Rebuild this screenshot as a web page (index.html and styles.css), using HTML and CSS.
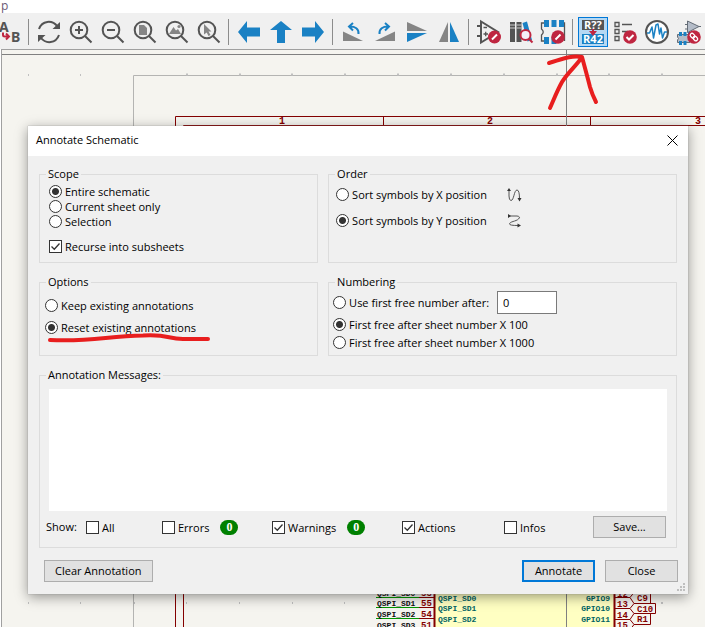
FILE: index.html
```html
<!DOCTYPE html>
<html lang="en">
<head>
<meta charset="utf-8">
<title>Annotate Schematic</title>
<link rel="stylesheet" href="styles.css">
</head>
<body>
<div class="app">
  <div class="menu-strip">p</div>

  <div class="toolbar" role="toolbar" aria-label="Schematic tools">
    <button class="tool tool-clipped" aria-label="Find and replace"><svg viewBox="0 0 32 32"><text class="glyph-letter" x="6" y="16">A</text><text class="glyph-letter" x="18" y="26">B</text><path class="line-red" d="M10 16.500V19Q10 20.500 12 20.500H15M13 17.500L16 20.500L13 23.500"/></svg></button>
    <span class="separator"></span>
    <button class="tool" aria-label="Refresh"><svg viewBox="0 0 32 32"><path class="line" d="M6 13C9 4.500 19 3.500 24.500 10.500M26 19C23 27.500 13 28.500 7.500 21.500"/><path class="dark" d="M27 6V13H19.500ZM5 26V19H12.500Z"/></svg></button>
    <button class="tool" aria-label="Zoom in"><svg viewBox="0 0 32 32"><circle class="line" cx="14" cy="14" r="8.300"/><path class="line" d="M10 14H18M14 10V18M20 20L26.500 26.500"/></svg></button>
    <button class="tool" aria-label="Zoom out"><svg viewBox="0 0 32 32"><circle class="line" cx="14" cy="14" r="8.300"/><path class="line" d="M10 14H18M20 20L26.500 26.500"/></svg></button>
    <button class="tool" aria-label="Zoom to page"><svg viewBox="0 0 32 32"><path class="gray" d="M10 9H15L18 12V19H10Z"/><circle class="line" cx="14" cy="14" r="8.300"/><path class="line" d="M20 20L26.500 26.500"/></svg></button>
    <button class="tool" aria-label="Zoom to objects"><svg viewBox="0 0 32 32"><path class="gray" d="M8 18L12.500 11L15 14.500L17 13L20 18Z"/><circle class="gray" cx="18" cy="10.500" r="1.600"/><circle class="line" cx="14" cy="14" r="8.300"/><path class="line" d="M20 20L26.500 26.500"/></svg></button>
    <button class="tool" aria-label="Zoom to selection"><svg viewBox="0 0 32 32"><path class="gray" d="M11 8L18.500 15.500H15.500L17.500 19L15.500 20L13.700 16.500L11 18.500Z"/><circle class="line" cx="14" cy="14" r="8.300"/><path class="line" d="M20 20L26.500 26.500"/></svg></button>
    <span class="separator"></span>
    <button class="tool" aria-label="Back"><svg viewBox="0 0 32 32"><path class="blue" d="M5 16L14 5V11.500H27V20.500H14V27Z"/></svg></button>
    <button class="tool" aria-label="Up"><svg viewBox="0 0 32 32"><path class="blue" d="M16 5L27 14H20V27H12V14H5Z"/></svg></button>
    <button class="tool" aria-label="Forward"><svg viewBox="0 0 32 32"><path class="blue" d="M27 16L18 5V11.500H5V20.500H18V27Z"/></svg></button>
    <span class="separator"></span>
    <button class="tool" aria-label="Rotate left"><svg viewBox="0 0 32 32"><path class="gray" d="M6 15.500V25H26Z"/><path class="line-blue" d="M21.500 18C22 12.500 18 10.500 13 10.500M16 7L12 10.500L16 14.500"/></svg></button>
    <button class="tool" aria-label="Rotate right"><svg viewBox="0 0 32 32"><path class="gray" d="M26 15.500V25H6Z"/><path class="line-blue" d="M10.500 18C10 12.500 14 10.500 19 10.500M16 7L20 10.500L16 14.500"/></svg></button>
    <button class="tool" aria-label="Mirror vertically"><svg viewBox="0 0 32 32"><path class="gray" d="M6 6V15H26Z"/><path class="blue" d="M6 17H26L6 26Z"/></svg></button>
    <button class="tool" aria-label="Mirror horizontally"><svg viewBox="0 0 32 32"><path class="gray" d="M6 26H15V6Z"/><path class="blue" d="M17 6V26H26Z"/></svg></button>
    <span class="separator"></span>
    <button class="tool" aria-label="Symbol editor"><svg viewBox="0 0 32 32"><path class="line" d="M8 5.500V26.500L25 16ZM4 10H8M4 20H8"/><path class="line-thin" d="M10.500 11.500H14M10.500 18H15M12.700 15.800V20.300"/><circle class="red" cx="21.500" cy="21" r="6.500"/><path class="line-white" d="M19 23.500L24 18.500"/></svg></button>
    <button class="tool" aria-label="Symbol library browser"><svg viewBox="0 0 32 32"><path class="dark" d="M5 6H10V26H5ZM11.500 6H16.500V26H11.500Z"/><path class="line-pale" d="M5 9H10M5 12H10M11.500 9H16.500M11.500 12H16.500"/><path class="blue" d="M17.500 7L22 5.500L27 24L22.500 25.500Z"/><circle class="lens" cx="20.500" cy="19" r="5"/><path class="line-red" d="M24 23L27.500 26.500"/></svg></button>
    <button class="tool" aria-label="Footprint editor"><svg viewBox="0 0 32 32"><path class="line-thin" d="M7 7H4.500V13Q8 16 4.500 19V25H7M24 7H27.500V25"/><path class="blue" d="M7 4H12V11H7ZM14.500 4H19.500V11H14.500ZM22 4H27V11H22ZM7 21H12V28H7ZM14.500 21H19.500V28H14.500Z"/><circle class="red" cx="21" cy="21" r="6.800"/><path class="line-white" d="M18.500 23.500L23.500 18.500"/></svg></button>
    <span class="separator"></span>
    <button class="tool tool-active" aria-label="Annotate schematic"><svg viewBox="0 0 32 32"><path class="dark" d="M5 4H27V14H5Z"/><path class="blue" d="M5 18H27V28H5Z"/><text class="glyph-tag" x="16" y="13">R??</text><text class="glyph-tag" x="16" y="27">R42</text><path class="red" d="M15 13H17V15H20L16 20L12 15H15Z"/></svg></button>
    <button class="tool" aria-label="Electrical rules checker"><svg viewBox="0 0 32 32"><path class="line-thin" d="M6 6.500H10V10.500H6ZM6 13.500H10V17.500H6ZM6 20.500H10V24.500H6ZM13 8.500H23M13 15.500H19"/><circle class="red" cx="21" cy="21" r="6.800"/><path class="line-white" d="M17.500 21L20 23.500L24.500 19"/></svg></button>
    <button class="tool" aria-label="Simulator"><svg viewBox="0 0 32 32"><circle class="disc" cx="16" cy="16" r="11"/><path class="wave" d="M6 17H8.500L11 11L12.500 22L15 9L17 8L18.500 18L20 12L21.500 22L23.500 16H26"/></svg></button>
    <button class="tool" aria-label="Assign footprints"><svg viewBox="0 0 32 32"><path class="symbol" d="M14.500 5V16.500L26 10.500ZM12 8.500H14M12 13H14M26 10.500H28"/><path class="symbol" d="M4.500 18.500H17V26.500H4.500V24Q6.500 22.500 4.500 21Z"/><path class="blue" d="M6 16H9V20H6ZM10.500 16H13.500V20H10.500ZM15 16H18V20H15ZM6 25H9V29H6ZM10.500 25H13.500V29H10.500Z"/><circle class="red" cx="21" cy="21" r="6.800"/><g class="chain" transform="rotate(45 21 21)"><rect x="16.500" y="19.300" width="5" height="3.600" rx="1.800"/><rect x="20.500" y="19.300" width="5" height="3.600" rx="1.800"/></g></svg></button>
  </div>

  <main class="canvas">
    <svg class="sheet" width="705" height="578" viewBox="0 49 705 578" aria-hidden="true">
      <path class="ruler" d="M2 54.500H4000"/>
      <path class="page-edge" d="M133.500 4000V75.500H4000"/>
      <path class="grid-dots" d="M28 75H29M80 75H81M186 74.500H188M239 74.500H241M291 74.500H293M344 74.500H346M397 74.500H399M450 74.500H452M503 74.500H505M556 74.500H558M608 74.500H610M661 74.500H663M28 603H29M80 603H81M134 603H135M186 603H187M239 603H240M292 603H293M344 603H345M661 603H663"/>
      <path class="frame" d="M175.500 4000V116.500H4000M183.500 4000V125.500H4000M383.500 116V125M590.500 116V125"/>
      <g class="frame-text"><text x="282" y="124">1</text><text x="490" y="124">2</text><text x="698" y="124">3</text></g>
      <path class="chip" d="M434.500 560H614.500V640H434.500Z"/>
      <path class="cursor" d="M566.500 50V4000"/>
      <path class="wire" d="M376 597.500H419M376 607.500H419M376 618.500H419"/>
      <path class="pin" d="M419 597.500H434M419 607.500H434M419 618.500H434M614 597.500H630M614 608.500H630M614 619.500H630"/>
      <g class="net"><text x="377" y="596">QSPI_SD0</text><text x="377" y="606">QSPI_SD1</text><text x="377" y="617">QSPI_SD2</text><text x="377" y="628">QSPI_SD3</text></g>
      <g class="pin-number"><text x="421" y="596">53</text><text x="421" y="606">55</text><text x="421" y="617">54</text><text x="421" y="628">51</text><text x="617" y="597">12</text><text x="617" y="607">13</text><text x="617" y="618">14</text><text x="617" y="628">15</text></g>
      <g class="pin-name"><text x="438" y="601">QSPI_SD0</text><text x="438" y="611">QSPI_SD1</text><text x="438" y="622">QSPI_SD2</text><text x="438" y="632">QSPI_SD3</text></g>
      <g class="pin-name pin-name-end"><text x="610" y="601">GPIO9</text><text x="610" y="611">GPIO10</text><text x="610" y="622">GPIO11</text><text x="610" y="632">GPIO12</text></g>
      <path class="pin" d="M630 597.500L634 592.500H650.500V603.500H634ZM630 608.500L634 603.500H655.500V613.500H634ZM630 619.500L634 613.500H650.500V624.500H634ZM630 630L634 624.500H650"/>
      <g class="pin-number"><text x="637" y="601">C9</text><text x="637" y="612">C10</text><text x="637" y="622">R1</text></g>
      <path class="marker" d="M549 63C560 60 570 55 582 57C578 64 568 72 562 82C557 91 554 99 550 108M582 57C585 68 588 79 590 87C592 94 594 98 596 102"/>
    </svg>
  </main>

  <section class="dialog" role="dialog" aria-labelledby="dialog-title">
    <header class="titlebar">
      <h1 class="title" id="dialog-title">Annotate Schematic</h1>
      <button class="close" aria-label="Close window"><svg viewBox="0 0 11 11"><path d="M.5.5L10.500 10.500M10.500.5L.5 10.500"/></svg></button>
    </header>
    <form class="body">
      <div class="groups">
        <fieldset class="group scope">
          <legend>Scope</legend>
          <label class="choice"><input type="radio" name="scope" checked>Entire schematic</label>
          <label class="choice"><input type="radio" name="scope">Current sheet only</label>
          <label class="choice"><input type="radio" name="scope">Selection</label>
          <label class="choice recurse"><input type="checkbox" checked>Recurse into subsheets</label>
        </fieldset>
        <fieldset class="group order">
          <legend>Order</legend>
          <div class="order-row">
            <label class="choice"><input type="radio" name="order">Sort symbols by X position</label>
            <svg class="order-icon" viewBox="0 0 16 16"><path d="M3 3V9Q3 13.500 5 13.500C8 13.500 8 3 11 3Q13.500 3 13.500 12"/><path class="tip" d="M1 4H5L3 1ZM11.500 11H15.500L13.500 14.500Z"/></svg>
          </div>
          <div class="order-row">
            <label class="choice"><input type="radio" name="order" checked>Sort symbols by Y position</label>
            <svg class="order-icon" viewBox="0 0 16 16"><path d="M2 3H11Q15 3.500 12.500 6C10 8.500 3.500 8.500 3.500 11Q3.500 12.500 12 12.500"/><path class="tip" d="M2 1L5 3L2 5ZM11.500 10.500L15 12.500L11.500 14.500Z"/></svg>
          </div>
        </fieldset>
        <fieldset class="group options">
          <legend>Options</legend>
          <label class="choice"><input type="radio" name="existing">Keep existing annotations</label>
          <label class="choice"><input type="radio" name="existing" checked>Reset existing annotations</label>
          <svg class="underline" viewBox="0 0 164 12" aria-hidden="true"><path d="M3 8C45 10 60 4 96 3.500C122 2 120 7 136 7H161"/></svg>
        </fieldset>
        <fieldset class="group numbering">
          <legend>Numbering</legend>
          <div class="number-row">
            <label class="choice"><input type="radio" name="number">Use first free number after:</label>
            <input class="number" type="text" value="0" aria-label="First free number after">
          </div>
          <label class="choice"><input type="radio" name="number" checked>First free after sheet number X 100</label>
          <label class="choice"><input type="radio" name="number">First free after sheet number X 1000</label>
        </fieldset>
      </div>
      <fieldset class="group messages">
        <legend>Annotation Messages:</legend>
        <textarea class="log" aria-label="Annotation messages" readonly></textarea>
        <div class="filters">
          <span class="show">Show:</span>
          <label class="choice"><input type="checkbox">All</label>
          <div class="filter"><label class="choice"><input type="checkbox">Errors</label><span class="count">0</span></div>
          <div class="filter"><label class="choice"><input type="checkbox" checked>Warnings</label><span class="count">0</span></div>
          <label class="choice"><input type="checkbox" checked>Actions</label>
          <label class="choice"><input type="checkbox">Infos</label>
          <button class="push" type="button">Save...</button>
        </div>
      </fieldset>
      <footer class="actions">
        <button class="push clear" type="button">Clear Annotation</button>
        <button class="push push-default" type="button">Annotate</button>
        <button class="push" type="button">Close</button>
      </footer>
    </form>
    <svg class="grip" viewBox="0 0 9 9" aria-hidden="true"><path d="M6 0H8V2H6ZM3 3H5V5H3ZM6 3H8V5H6ZM0 6H2V8H0ZM3 6H5V8H3ZM6 6H8V8H6Z"/></svg>
  </section>
</div>
</body>
</html>
```
FILE: styles.css
```css
* { box-sizing: border-box; }

body {
  margin: 0;
  font: 11px/16px "Open Sans", "Noto Sans", sans-serif;
  color: #000;
}

button, input, textarea { font: inherit; color: inherit; margin: 0; }

.app {
  position: relative;
  display: flex;
  flex-direction: column;
  height: 100vh;
  overflow: hidden;
  background: #fff;
}

.menu-strip {
  height: 13px;
  line-height: 12px;
  padding-left: 1px;
  font-size: 12px;
  color: #6b5a75;
}

/* Toolbar */
.toolbar {
  display: flex;
  flex: none;
  height: 36px;
  padding-top: 3px;
  background: #f0f0f0;
  overflow: hidden;
}
.tool {
  flex: none;
  width: 32px;
  height: 32px;
  padding: 0;
  border: 0;
  background: none;
}
.tool svg { display: block; width: 32px; height: 32px; }
.tool-clipped { margin-left: -7px; }
.tool-active {
  background: #b5d8f3;
  box-shadow: inset 0 0 0 1px #0078d7;
  width: 30px;
  height: 30px;
  margin: 1px;
}
.tool-active svg { margin: -1px; }
.separator {
  flex: none;
  width: 8px;
  height: 26px;
  margin-top: 3px;
  background: linear-gradient(#8c8c8c, #8c8c8c) 3px 0 / 1px 100% no-repeat;
}

.dark { fill: #545454; }
.gray { fill: #858585; }
.blue { fill: #1a81c4; }
.red { fill: #bf2641; }
.line, .line-thin, .line-blue, .line-red, .line-white, .line-pale { fill: none; stroke-width: 2; }
.line { stroke: #545454; }
.line-thin { stroke: #545454; stroke-width: 1.300; }
.line-blue { stroke: #1a81c4; }
.line-red { stroke: #bf2641; }
.line-white { stroke: #fff; }
.line-pale { stroke: #ccc; stroke-width: 1; }
.lens { fill: #f4eef8; stroke: #bf2641; stroke-width: 2; }
.disc { fill: #fff; stroke: #545454; stroke-width: 2; }
.wave { fill: none; stroke: #1a81c4; stroke-width: 1.500; stroke-linejoin: round; }
.symbol { fill: #b4bcc8; stroke: #646c76; stroke-width: 1; }
.chain { fill: none; stroke: #fff; stroke-width: 1.300; }
.glyph-letter { font: bold 14px "Noto Sans", sans-serif; fill: #545454; }
.glyph-tag { font: bold 11px "Open Sans", sans-serif; fill: #fff; text-anchor: middle; }

/* Drawing canvas */
.canvas {
  position: relative;
  flex: 1;
  min-height: 0;
  overflow: hidden;
  background: #f5f4ef;
  margin-left: 1px;
  box-shadow: inset 1px 1px #a0a0a0;
}
.sheet { position: absolute; top: 0; left: -1px; overflow: visible; }
.sheet path { fill: none; }
.ruler { stroke: #808080; }
.page-edge { stroke: #b4b4b2; }
.grid-dots { stroke: #c0c0c0; stroke-width: 2; }
.frame, .pin { stroke: #840000; }
.cursor { stroke: #808080; }
.wire { stroke: #009600; }
.sheet .chip { fill: #ffffc2; stroke: #840000; stroke-width: 2; }
.marker { stroke: #e81e1e; stroke-width: 4; stroke-linecap: round; stroke-linejoin: round; }
.frame-text, .net, .pin-number, .pin-name { font: bold 8px "Liberation Mono", monospace; }
.frame-text { font-size: 10px; text-anchor: middle; fill: #840000; }
.pin-number { font-size: 9px; fill: #840000; }
.net { fill: #0f0f0f; }
.pin-name { fill: #006464; }
.pin-name-end { text-anchor: end; }

/* Dialog window */
.dialog {
  position: absolute;
  top: 126px;
  left: 28px;
  right: 17px;
  background: #f0f0f0;
  box-shadow: 0 0 1px #888, 0 3px 12px rgba(0, 0, 0, .4);
}
.titlebar {
  display: flex;
  align-items: center;
  justify-content: space-between;
  height: 30px;
  padding: 0 10px 2px 8px;
  background: #fff;
}
.title { margin: 0; font-size: 11px; font-weight: 400; }
.close { padding: 0; border: 0; background: none; }
.close svg { display: block; width: 11px; height: 11px; fill: none; stroke: #000; }

.body { padding: 10px 11px 12px; }
.groups { display: grid; grid-template-columns: 4fr 5fr; gap: 11px 10px; }
.group {
  position: relative;
  min-width: 0;
  margin: 0;
  border: 1px solid #dcdcdc;
}
legend { padding: 0 2px; margin-left: -3px; }
.choice { display: flex; align-items: center; gap: 3px; height: 15px; line-height: 15px; white-space: nowrap; }
.choice input {
  appearance: none;
  flex: none;
  width: 13px;
  height: 13px;
  border: 1px solid #333;
  background: #fff;
}
.choice input[type="radio"] { border-radius: 50%; }
.choice input[type="radio"]:checked { background: radial-gradient(circle, #333 3px, #fff 4px); }
.choice input[type="checkbox"]:checked {
  background: url("data:image/svg+xml,%3Csvg xmlns='http://www.w3.org/2000/svg' viewBox='0 0 11 11'%3E%3Cpath d='M1.500 5.500L4.300 8.300L9.500 2.500' fill='none' stroke='%23333' stroke-width='1.300'/%3E%3C/svg%3E") #fff;
}

.scope { padding: 2px 9px 8px; }
.recurse { margin-top: 10px; }
.order { padding: 5px 7px; }
.order legend { margin-left: -1px; }
.order-row { display: flex; align-items: center; gap: 19px; height: 15px; margin-bottom: 11px; }
.order-icon { width: 16px; height: 16px; fill: none; stroke: #555; }
.order-icon .tip { fill: #333; stroke: none; }
.options { padding: 8px 5px 20px; }
.options legend { margin-left: 1px; }
.options .choice + .choice { margin-top: 7px; }
.underline { position: absolute; left: 7px; top: 42px; width: 164px; height: 12px; fill: none; stroke: #e81e1e; stroke-width: 4; stroke-linecap: round; }
.numbering { padding: 1px 4px 4px; }
.numbering legend { margin-left: 2px; }
.number-row { display: flex; align-items: center; gap: 8px; }
.numbering > .choice { margin-top: 3px; }
.number { width: 60px; height: 23px; padding: 0 5px; border: 1px solid #7a7a7a; background: #fff; }

.messages { margin-top: 11px; padding: 6px 9px 9px; }
.log { display: block; width: 100%; height: 122px; border: 0; padding: 4px; background: #fff; resize: none; }
.filters {
  display: grid;
  grid-template-columns: 40px 76px 110px 130px 102px 1fr auto;
  align-items: center;
  margin: 5px 1px 0 -3px;
}
.filter { display: flex; align-items: center; gap: 11px; }
.count {
  width: 18px;
  height: 15px;
  border-radius: 8px;
  background: #008000;
  color: #fff;
  font: bold 12px/15px "Liberation Serif", serif;
  text-align: center;
}
.push {
  min-width: 73px;
  height: 22px;
  padding: 0 10px;
  border: 1px solid #adadad;
  background: #e1e1e1;
  line-height: 18px;
}
.push-default { border: 2px solid #0078d7; }
.actions { display: flex; gap: 10px; margin: 12px -1px 0 5px; }
.clear { margin-right: auto; }
.grip { position: absolute; right: 2px; bottom: 2px; width: 9px; height: 9px; fill: #bfbfbf; }
```
